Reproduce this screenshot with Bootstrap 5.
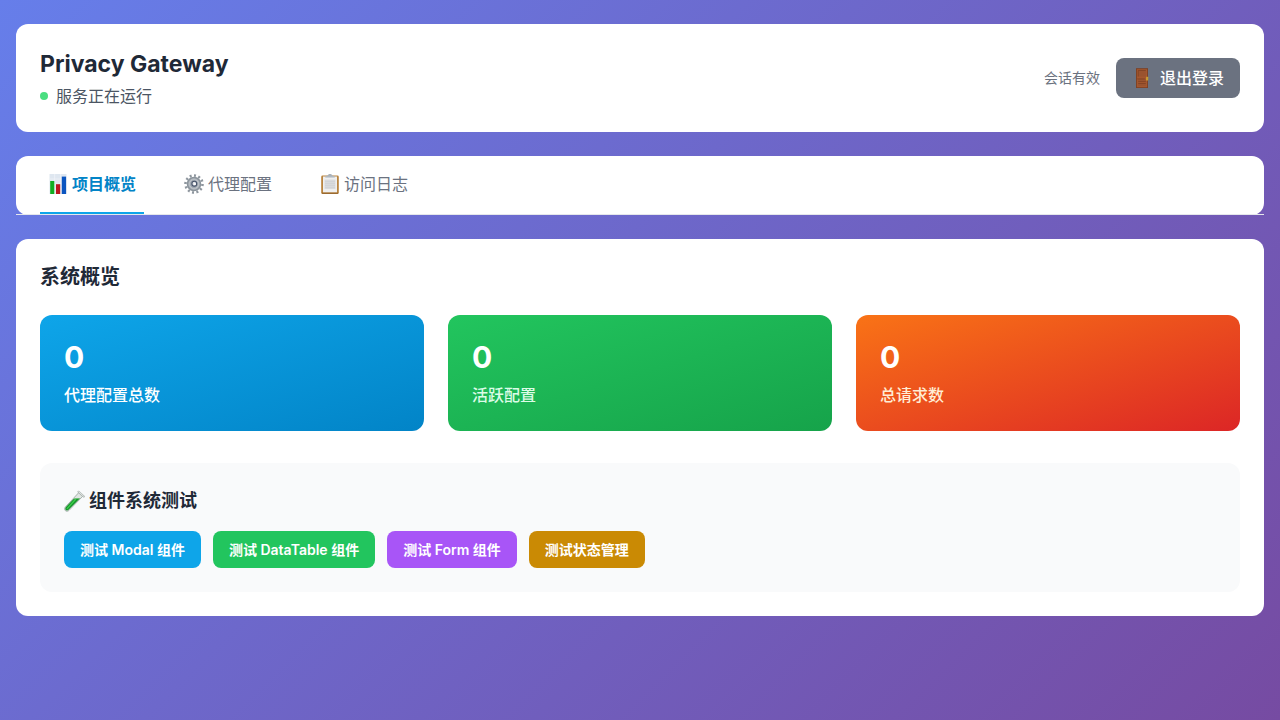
<!DOCTYPE html>
<html lang="zh-CN">
<head>
<meta charset="utf-8">
<meta name="viewport" content="width=device-width, initial-scale=1">
<title>Privacy Gateway</title>
<link href="https://cdn.jsdelivr.net/npm/bootstrap@5.3.0/dist/css/bootstrap.min.css" rel="stylesheet">
<style>
  body {
    font-family: Inter, "Noto Sans CJK SC", sans-serif;
    font-size: 16px;
    line-height: 24px;
    color: #1f2937;
    background: linear-gradient(135deg, #667eea 0%, #764ba2 100%);
  }
  .panel { background: #fff; border-radius: 12px; }
  .page-title { font-size: 23px; line-height: 32px; font-weight: 700; }
  .status-line { color: #4b5563; }
  .status-dot { width: 8px; height: 8px; border-radius: 50%; background: #4ade80; }
  .session { font-size: 14px; line-height: 20px; color: #6b7280; }
  .glyph { width: 20px; height: 20px; flex: none; }
  .glyph-lg { width: 21px; height: 22px; flex: none; }
  .btn { --bs-btn-border-width: 0; --bs-btn-border-radius: 8px; --bs-btn-padding-x: 16px; --bs-btn-padding-y: 8px; --bs-btn-color: #fff; --bs-btn-hover-color: #fff; }
  .btn-logout { --bs-btn-bg: #6b7280; --bs-btn-hover-bg: #4b5563; --bs-btn-line-height: 24px; --bs-btn-font-weight: 500; }
  .tabs { gap: 32px; border-bottom: 1px solid #e5e7eb; }
  .tabs .nav-link { padding: 16px 8px; color: #6b7280; border-bottom: 2px solid transparent; }
  .tabs .nav-link.active { color: #0284c7; border-color: #0ea5e9; font-weight: 600; }
  .section-title { font-size: 20px; line-height: 28px; font-weight: 600; }
  .stat { border-radius: 12px; color: #fff; }
  .stat-blue { background: linear-gradient(to bottom right, #0ea5e9, #0284c7); }
  .stat-green { background: linear-gradient(to bottom right, #22c55e, #16a34a); }
  .stat-orange { background: linear-gradient(to bottom right, #f97316, #dc2626); }
  .stat-value { font-size: 30px; line-height: 36px; font-weight: 700; }
  .stat-label { font-weight: 500; }
  .stat-green .stat-label { color: #dcfce7; }
  .stat-orange .stat-label { color: #ffedd5; }
  .test-area { background: #f9fafb; border-radius: 12px; margin-top: 32px; }
  .test-title { font-size: 18px; line-height: 28px; font-weight: 600; }
  .test-buttons { gap: 12px; }
  .test-buttons .btn { --bs-btn-font-size: 14px; --bs-btn-line-height: 21px; --bs-btn-font-weight: 600; }
  .btn-sky { --bs-btn-bg: #0ea5e9; --bs-btn-hover-bg: #0284c7; }
  .btn-leaf { --bs-btn-bg: #22c55e; --bs-btn-hover-bg: #16a34a; }
  .btn-violet { --bs-btn-bg: #a855f7; --bs-btn-hover-bg: #9333ea; }
  .btn-amber { --bs-btn-bg: #ca8a04; --bs-btn-hover-bg: #a16207; }
</style>
</head>
<body class="min-vh-100">
<div class="px-3 py-4 d-flex flex-column gap-4">
  <header class="panel p-4 d-flex justify-content-between align-items-center">
    <div>
      <h1 class="page-title mb-1">Privacy Gateway</h1>
      <div class="status-line d-flex align-items-center gap-2"><span class="status-dot"></span>服务正在运行</div>
    </div>
    <div class="d-flex align-items-center gap-3">
      <span class="session">会话有效</span>
      <button type="button" class="btn btn-logout d-flex align-items-center gap-2">
        <svg class="glyph" viewBox="0 0 20 20" aria-hidden="true">
          <rect x="4" y="0.2" width="12" height="19.8" fill="#7d4023"/>
          <rect x="4.9" y="1.2" width="10.2" height="18" fill="#a4572f"/>
          <path d="M6.2 2.5h7.6v6H6.2zM6.2 11h7.6v2.6H6.2zM6.2 15.6h7.6v2.5H6.2z" fill="#9a532f"/>
          <path d="M6.2 8.5V2.5h7.6M6.2 13.6h7.6M5.2 10.9h7.6M6.2 15.5h7.6" fill="none" stroke="#7a3e21" stroke-width=".7"/>
          <rect x="14" y="8.8" width="2.2" height="3.6" rx=".5" fill="#c99a2e"/>
        </svg>退出登录</button>
    </div>
  </header>

  <div class="panel">
    <nav class="tabs nav px-4">
      <a class="nav-link active d-flex align-items-center gap-1" href="#overview" aria-current="page">
        <svg class="glyph" viewBox="0 0 20 20" aria-hidden="true">
          <rect x="1.5" width="17" height="20" fill="#dfe7f0"/>
          <path d="M1.5 5h17M1.5 10h17M1.5 15h17M6.7 0v20M12.7 0v20" stroke="#f2f5f9" stroke-width=".7"/>
          <rect x="2.2" y="7" width="4.1" height="13" fill="#10ad20"/>
          <rect x="8" y="10.2" width="4.2" height="9.8" fill="#bd1620"/>
          <rect x="13.8" y="2.6" width="4.3" height="17.4" fill="#0b55c0"/>
        </svg>项目概览</a>
      <a class="nav-link d-flex align-items-center gap-1" href="#config">
        <svg class="glyph" viewBox="0 0 20 20" aria-hidden="true">
          <circle cx="10" cy="10" r="8.5" fill="none" stroke="#8e969e" stroke-width="2.6" pathLength="24" stroke-dasharray=".9 1.1"/>
          <circle cx="10" cy="10" r="6.5" fill="#b4bac0" stroke="#8b949c" stroke-width="1.6"/>
          <circle cx="10" cy="10" r="4.4" fill="#98a1aa" stroke="#c3c8cd" stroke-width=".8"/>
          <circle cx="10.3" cy="9.7" r="2.4" fill="#e3e6e9" stroke="#46536a" stroke-width="1.1"/>
          <circle cx="10.8" cy="10" r="1" fill="#fff"/>
        </svg>代理配置</a>
      <a class="nav-link d-flex align-items-center gap-1" href="#logs">
        <svg class="glyph" viewBox="0 0 20 20" aria-hidden="true">
          <rect x="1.2" y="1.5" width="17.6" height="18.5" rx="1.4" fill="#b9843f"/>
          <path d="M1.8 19.2h16.4" stroke="#8e5f29" stroke-width="1"/>
          <rect x="3" y="2.5" width="14" height="15.8" fill="#efefef"/>
          <rect x="4.6" y="5.6" width="10.8" height="9.4" fill="#d9dadc"/>
          <path d="M5 7.500h10M5 9.500h10M5 11.500h10M5 13.500h10" stroke="#d0d2d5" stroke-width=".8"/>
          <path d="M5.5 3.8V2.2l2.3-.7C8.2.4 9 0 10 0s1.800.4 2.200 1.500l2.300.7v1.600z" fill="#aab2ba"/>
          <path d="M5.700 3.300h8.600" stroke="#d5dade" stroke-width=".8"/>
        </svg>访问日志</a>
    </nav>
  </div>

  <main class="panel p-4" id="overview">
    <h2 class="section-title mb-4">系统概览</h2>
    <div class="row g-4">
      <div class="col-md-4"><div class="stat stat-blue p-4"><div class="stat-value mb-2">0</div><div class="stat-label">代理配置总数</div></div></div>
      <div class="col-md-4"><div class="stat stat-green p-4"><div class="stat-value mb-2">0</div><div class="stat-label">活跃配置</div></div></div>
      <div class="col-md-4"><div class="stat stat-orange p-4"><div class="stat-value mb-2">0</div><div class="stat-label">总请求数</div></div></div>
    </div>
    <section class="test-area p-4">
      <h3 class="test-title mb-3 d-flex align-items-center gap-1">
        <svg class="glyph-lg" viewBox="0 0 21 22" aria-hidden="true">
          <path d="M14.800 2.600 1.500 16.800c-1.200 1.400-1 3.100-.1 3.900 1 .9 2.600.7 3.700-.4L18.800 6.200z" fill="#dfe5e2" stroke="#98a39d" stroke-width=".8"/>
          <path d="M9.600 8.900 2 17.100c-1 1.100-.8 2.400-.2 3 .7.600 1.900.5 2.800-.4L15.800 8.500z" fill="#149229"/>
          <path d="M11.400 9.600 3.200 18.400" stroke="#3ccd4b" stroke-width="1.400" stroke-linecap="round"/>
          <path d="M9.800 8.800l5.800-.3" stroke="#67bd70" stroke-width="1"/>
          <path d="M14.500 1.700l5.300 4.900" stroke="#aeb6b2" stroke-width="2" stroke-linecap="round"/>
          <path d="M14.700 1.800l4.800 4.400" stroke="#f0f3f2" stroke-width=".8" stroke-linecap="round"/>
        </svg>组件系统测试</h3>
      <div class="test-buttons d-flex flex-wrap">
        <button type="button" class="btn btn-sky">测试 Modal 组件</button>
        <button type="button" class="btn btn-leaf">测试 DataTable 组件</button>
        <button type="button" class="btn btn-violet">测试 Form 组件</button>
        <button type="button" class="btn btn-amber">测试状态管理</button>
      </div>
    </section>
  </main>
</div>
<script src="https://cdn.jsdelivr.net/npm/bootstrap@5.3.0/dist/js/bootstrap.bundle.min.js"></script>
</body>
</html>
